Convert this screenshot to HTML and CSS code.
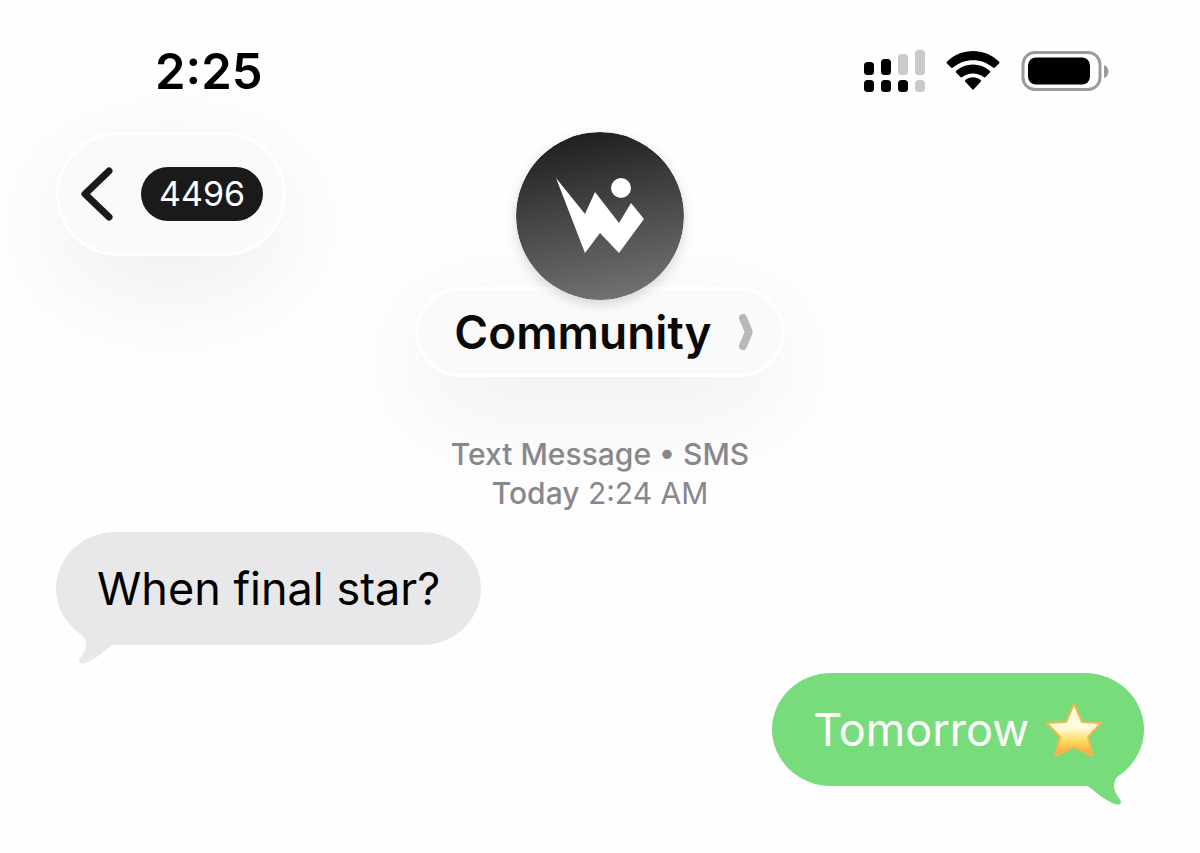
FILE: index.html
```html
<!DOCTYPE html>
<html lang="en">
<head>
    <meta charset="UTF-8">
    <meta name="viewport" content="width=device-width, initial-scale=1.0">
    <title>Community</title>
    <link rel="stylesheet" href="styles.css">
</head>
<body>
    <div class="status-bar">
        <time class="clock">2:25</time>
        <div class="status-icons">
            <svg class="signal" width="62" height="43" viewBox="0 0 62 43" role="img" aria-label="Signal">
                <rect x="1" y="12" width="10" height="13" rx="3.500"/>
                <rect x="18" y="9" width="10" height="16" rx="3.500"/>
                <rect class="dim" x="35" y="4" width="10" height="21" rx="3.500"/>
                <rect class="dim" x="52" y="0" width="10" height="25" rx="3.500"/>
                <rect x="1" y="30" width="10" height="12" rx="3.500"/>
                <rect x="18" y="30" width="10" height="12" rx="3.500"/>
                <rect x="35" y="30" width="10" height="12" rx="3.500"/>
                <rect class="dim" x="52" y="30" width="10" height="12" rx="3.500"/>
            </svg>
            <svg class="wifi" width="54" height="40" viewBox="0 0 54 40" role="img" aria-label="Wi-Fi">
                <path d="M1 12.500Q0 11.400 1.200 10.400C16-3.400 38-3.400 52.800 10.400Q54 11.400 53 12.500L48.900 16.600Q48 17.500 47 16.600C36 6.700 18 6.700 7 16.600Q6 17.500 5.100 16.600Z"/>
                <path d="M10.200 21.700Q9.200 20.700 10.300 19.700C19.800 11.300 34.200 11.300 43.700 19.700Q44.800 20.700 43.800 21.700L39.500 26Q38.600 26.800 37.600 26C31.800 21.200 22.200 21.200 16.400 26Q15.400 26.800 14.500 26Z"/>
                <path d="M19.300 30.800Q18.300 29.800 19.400 28.900C23.700 25.400 30.300 25.400 34.600 28.900Q35.700 29.800 34.700 30.800L28 37.900Q27 38.900 26 37.900Z"/>
            </svg>
            <svg class="battery" width="88" height="41" viewBox="0 0 88 41" role="img" aria-label="Battery">
                <rect class="battery-case" x="2" y="1.500" width="77" height="37" rx="12"/>
                <rect x="7" y="6.500" width="62" height="27" rx="8"/>
                <path class="battery-cap" d="M83 14C89 16 89 25 83 27Z"/>
            </svg>
        </div>
    </div>

    <header class="chat-header">
        <button type="button" class="back-button glass" aria-label="Back, 4496 unread">
            <svg width="32" height="54" viewBox="0 0 32 54" aria-hidden="true">
                <path d="M28 4L4 27L28 50"/>
            </svg>
            <span class="unread-count">4496</span>
        </button>

        <div class="contact">
            <svg class="avatar" viewBox="0 0 168 168" aria-hidden="true">
                <defs>
                    <linearGradient id="avatar-fill" x1="0.4" y1="0" x2="0.6" y2="1">
                        <stop offset="0" stop-color="#1f1f1f"/>
                        <stop offset="1" stop-color="#727272"/>
                    </linearGradient>
                </defs>
                <circle cx="84" cy="84" r="84" fill="url(#avatar-fill)"/>
                <path fill="#fff" d="M40 46L69 82L79 60L103 91L115 71L128 87L103 121L84 101L69 121Z"/>
                <circle cx="105" cy="56" r="10" fill="#fff"/>
            </svg>
            <button type="button" class="contact-name glass">
                Community
                <svg width="14" height="36" viewBox="0 0 14 36" aria-hidden="true">
                    <path d="M4 4L9 16Q10 18 9 20L4 32"/>
                </svg>
            </button>
        </div>
    </header>

    <main class="messages">
        <p class="message-info">
            <strong>Text Message • SMS</strong><br>
            <strong>Today</strong> 2:24 AM
        </p>

        <div class="bubble received">
            When final star?
            <svg class="tail" width="50" height="36" viewBox="0 0 50 36" aria-hidden="true">
                <path d="M4 4C8 7 10 11 10 16C10 24 3 29 3 32C3 35 6 35 9 34C20 30 28 22 35 17C38 15 41 15 46 15V4Z"/>
            </svg>
        </div>

        <div class="bubble sent">
            Tomorrow
            <svg class="star" width="58" height="56" viewBox="0 0 58 56" role="img" aria-label="Star">
                <defs>
                    <linearGradient id="star-fill" x1="0" y1="0" x2="0" y2="1">
                        <stop offset="0" stop-color="#fff8dc"/>
                        <stop offset="0.45" stop-color="#fffce0"/>
                        <stop offset="0.7" stop-color="#ffdc60"/>
                        <stop offset="1" stop-color="#f3a23a"/>
                    </linearGradient>
                </defs>
                <path fill="url(#star-fill)" stroke="#f2b752" stroke-width="2" stroke-linejoin="round" d="M29 2L37 20L56 21L43 35L48 54L29 45L10 54L15 35L2 21L21 20Z"/>
            </svg>
            <svg class="tail" width="50" height="36" viewBox="0 0 50 36" aria-hidden="true">
                <path d="M4 4C8 7 10 11 10 16C10 24 3 29 3 32C3 35 6 35 9 34C20 30 28 22 35 17C38 15 41 15 46 15V4Z"/>
            </svg>
        </div>
    </main>
</body>
</html>
```
FILE: styles.css
```css
:root {
    --received-color: #e8e8ea;
    --sent-color: #78dc7d;
    --meta-color: #88888c;
}

* {
    box-sizing: border-box;
}

body {
    margin: 0;
    padding: 39px 56px;
    font-family: Inter, "Liberation Sans", sans-serif;
    background: #fefefe;
    color: #000;
    overflow-x: hidden;
}

button {
    border: none;
    font-family: inherit;
    cursor: pointer;
}

.status-bar {
    display: flex;
    align-items: center;
    justify-content: space-between;
    height: 64px;
    padding: 0 35px 0 99px;
}

.clock {
    font-size: 49px;
    font-weight: 600;
}

.status-icons {
    display: flex;
    align-items: center;
    gap: 21px;
}

.status-icons .dim {
    fill: #cacaca;
}

.battery-case {
    fill: none;
    stroke: #9b9b9b;
    stroke-width: 3;
}

.battery-cap {
    fill: #9b9b9b;
}

.chat-header {
    display: grid;
    grid-template-columns: 1fr auto 1fr;
    align-items: start;
    margin-top: 29px;
}

.glass {
    background: #fafafa;
    border: 3px solid #fff;
    border-radius: 62px;
    box-shadow: 0 30px 110px rgba(0, 0, 0, 0.07);
}

.back-button {
    display: flex;
    align-items: center;
    justify-self: start;
    gap: 28px;
    height: 124px;
    padding: 0 20px 0 22px;
}

.back-button path {
    fill: none;
    stroke: #1a1a1a;
    stroke-width: 7;
    stroke-linecap: round;
    stroke-linejoin: round;
}

.unread-count {
    padding: 0 18px;
    border-radius: 27px;
    background: #1a1a1a;
    color: #fff;
    font-size: 34px;
    line-height: 54px;
}

.contact {
    display: flex;
    flex-direction: column;
    align-items: center;
}

.avatar {
    position: relative;
    z-index: 1;
    width: 168px;
    height: 168px;
    border-radius: 50%;
    box-shadow: 0 4px 12px rgba(0, 0, 0, 0.15);
}

.contact-name {
    display: flex;
    align-items: center;
    gap: 27px;
    height: 90px;
    margin-top: -13px;
    padding: 0 28px 0 35px;
    color: #0a0a0a;
    font-size: 46px;
    font-weight: 600;
}

.contact-name path {
    fill: none;
    stroke: #b9b9b9;
    stroke-width: 8;
    stroke-linecap: round;
    stroke-linejoin: round;
}

.messages {
    display: flex;
    flex-direction: column;
    gap: 28px;
}

.message-info {
    margin: 58px 0 -9px;
    color: var(--meta-color);
    font-size: 30px;
    line-height: 39px;
    text-align: center;
}

.message-info strong {
    font-weight: 500;
}

.bubble {
    position: relative;
    display: flex;
    align-items: center;
    gap: 16px;
    height: 113px;
    padding: 0 41px;
    border-radius: 60px / 57px;
    font-size: 45px;
}

.received {
    align-self: flex-start;
    background: var(--received-color);
}

.sent {
    align-self: flex-end;
    background: var(--sent-color);
    color: #fff;
}

.tail {
    position: absolute;
    bottom: -20px;
    left: 20px;
    fill: var(--received-color);
}

.sent .tail {
    right: 20px;
    left: auto;
    fill: var(--sent-color);
    transform: scaleX(-1);
}
```
